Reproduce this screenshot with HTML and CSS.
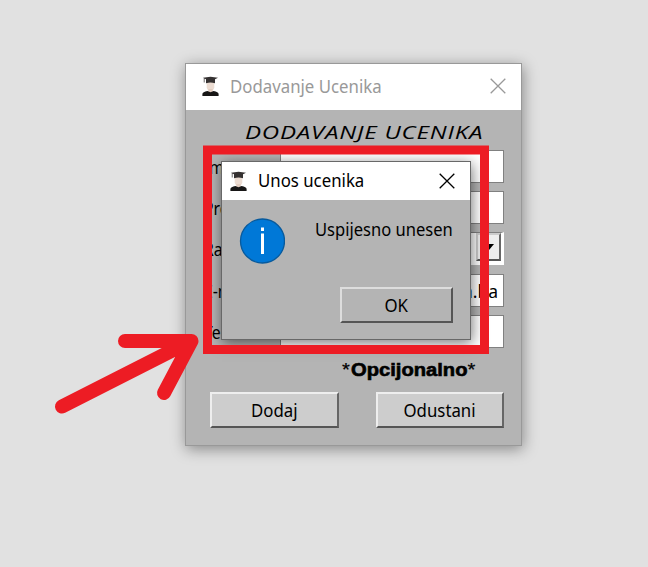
FILE: index.html
```
<!DOCTYPE html>
<html lang="bs"><head><meta charset="utf-8"><title>Dodavanje Ucenika</title><link rel="stylesheet" href="styles.css"></head>
<body>
<svg width="0" height="0" class="defs"><defs>
<symbol id="grad" viewBox="0 0 17 21">
<path d="M4.7 6h7.6v5.2c0 2-1.500 3.4-3.8 3.4s-3.8-1.4-3.8-3.4z" fill="#ecdcd2"/><path d="M6.3 13h4.400v4H6.300z" fill="#e3cdc0"/>
<path d="M1 1.800 8.500 .8 16 1.800 13 3.200v4q-4.500-1.500-9 0v-4L2.500 2.600V6.500H1.800V2.300z" fill="#353131"/>
<path d="M.4 20v-2c0-1.6 2-2.3 5-3l3.100 1.200 3.100-1.200c3 .7 5 1.4 5 3v2z" fill="#171616"/></symbol>
<symbol id="close" viewBox="0 0 16 16"><path d="m.7.7 14.6 14.6m0-14.6L.7 15.3" fill="none" stroke="currentColor" stroke-width="1.3"/></symbol>
</defs></svg>
<main class="window">
<header class="titlebar"><svg class="grad"><use href="#grad"/></svg><span class="title">Dodavanje Ucenika</span><svg class="close"><use href="#close"/></svg></header>
<h1><span>DODAVANJE UCENIKA</span></h1>
<form class="fields">
<label>Ime</label><div class="input">Meho</div>
<label>Prezime</label><div class="input"></div>
<label>Razred</label><div class="input combo"><span class="drop"><svg width="10" height="6"><path d="M0 0h10L5 6z"/></svg></span></div>
<label>E-mail</label><div class="input end">n.ba</div>
<label>Telefon</label><div class="input"></div>
</form>
<p class="optional"><span><i>*</i>Opcijonalno<i>*</i></span></p>
<footer class="actions"><button><span>Dodaj</span></button><button><span>Odustani</span></button></footer>
</main>
<section class="dialog">
<header class="titlebar"><svg class="grad"><use href="#grad"/></svg><span class="title">Unos ucenika</span><svg class="close"><use href="#close"/></svg></header>
<div class="message"><svg class="info" viewBox="0 0 46 46"><circle cx="23.500" cy="23" r="22" fill="#0078d7" stroke="#075a9d" stroke-width="1.3"/><path d="M23.500 15.500v20.500M23.500 9.500v3.500" stroke="#fff" stroke-width="3"/></svg><span>Uspijesno unesen</span></div>
<button class="ok"><span>OK</span></button>
</section>
<svg class="marks" viewBox="0 0 648 567"><rect x="207.5" y="150" width="277" height="199.5" stroke-width="9"/><path d="M62 406.500 191 341M125 341h66.500l-27.500 52" stroke-width="14" stroke-linecap="round" stroke-linejoin="round"/></svg>
</body></html>
```
FILE: styles.css
```
* { box-sizing: border-box; }
body { margin: 0; width: 648px; height: 567px; overflow: hidden; background: #e1e1e1; position: relative; font: 17.5px "Noto Sans", sans-serif; color: #000; }
.defs { position: absolute; }
.window { position: absolute; left: 185px; top: 63px; width: 337px; height: 383px; border: 1.5px solid #999; background: #b4b4b4; box-shadow: 1px 3px 14px #0006; overflow: hidden; }
.titlebar { display: flex; align-items: center; background: #fff; }
.titlebar span, .message span, button span, .optional span, h1 span, label { display: inline-block; white-space: nowrap; }
.window .titlebar { height: 46px; padding: 0 15px 0 16px; color: #999; }
.grad { width: 17px; height: 21px; flex: none; }
.window .grad { margin-top: -2px; }
.close { width: 16px; height: 16px; margin-left: auto; flex: none; }
.window .close { margin-top: -2px; }
.title { margin: -2px 0 0 11px; transform: scaleX(.96); transform-origin: left; }
h1 { margin: 8px 0 0 59px; height: 32px; font: italic 18.5px/28px "Open Sans", sans-serif; letter-spacing: .6px; white-space: nowrap; }
h1 span { transform: scaleX(1.3); transform-origin: left; }
.fields { display: grid; grid-template-columns: 76px 224px; grid-auto-rows: 33px; row-gap: 8.2px; padding-left: 18px; }
label { line-height: 35px; transform: scaleX(.9); transform-origin: left; }
.input { border: 1.5px solid #808080; background: #fff; padding-left: 4px; line-height: 34px; overflow: hidden; }
.end { text-align: right; padding-right: 5px; line-height: 32px; }
.combo { border: 0; border-top: 1px solid #808080; border-right: 3px solid #fff; border-bottom: 4px solid #fff; display: flex; justify-content: flex-end; }
.drop { width: 25px; height: 28px; background: #eee; border: 2px solid; border-color: #ccc #666 #555 #ccc; display: flex; align-items: center; justify-content: center; }
.optional { margin: 10px 0 0 156px; height: 24px; font: bold 18px/24px "Liberation Sans", sans-serif; -webkit-text-stroke: .6px #000; }
.optional span { transform: scaleX(1.12); transform-origin: left; }
.optional i { font-style: normal; font-weight: normal; letter-spacing: 1px; -webkit-text-stroke: .2px #000; }
.actions { display: flex; justify-content: space-between; margin: 10px 17px 0 24px; }
button { font: 17.5px/30px "Noto Sans", sans-serif; height: 36px; width: 129px; padding: 0; border: 2px solid; border-color: #eee #666 #555 #eee; background: #cdcdcd; color: #000; }
.actions button + button { width: 128px; }
button span { transform: scaleX(.96); }
.dialog { position: absolute; left: 221px; top: 161px; width: 250px; height: 179px; background: #b4b4b4; border: 1px solid #686868; box-shadow: 1px 3px 13px #0008; }
.dialog .titlebar { height: 38px; padding: 0 15px 0 8px; }
.message { display: flex; margin: 18px 17px 0 17px; height: 46px; justify-content: space-between; line-height: 23px; }
.message span { transform: scaleX(.945); transform-origin: right; }
.info { width: 46px; height: 46px; }
.ok { display: block; width: 113px; margin: 23px 0 0 118px; background: #b4b4b4; border-color: #ddd #555 #555 #ddd; }
.marks { position: absolute; inset: 0; width: 648px; height: 567px; fill: none; stroke: #ed1c24; }
```
